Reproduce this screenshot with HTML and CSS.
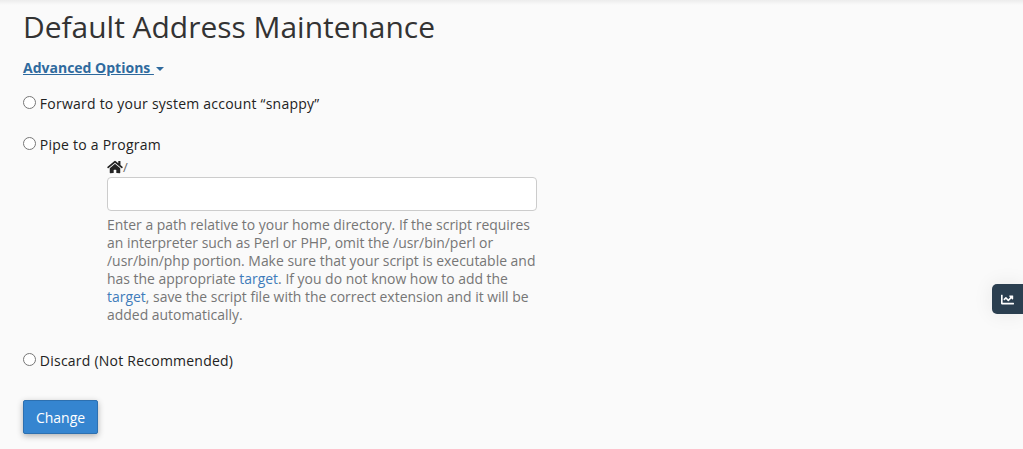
FILE: index.html
```html
<!DOCTYPE html>
<html lang="en">
<head>
<meta charset="utf-8">
<title>Default Address Maintenance</title>
<link rel="stylesheet" href="styles.css">
</head>
<body>
<div class="top-shadow"></div>
<main class="content">
  <h1 class="title">Default Address Maintenance</h1>
  <p class="advanced"><a href="#" class="advanced-link">Advanced Options <span class="caret"></span></a></p>
  <div class="option option-forward">
    <label class="radio-label"><input type="radio" name="d"> Forward to your system account “snappy”</label>
  </div>
  <div class="option option-pipe">
    <label class="radio-label"><input type="radio" name="d"> Pipe to a Program</label>
  </div>
  <div class="pipe-detail">
    <div class="home-row"><svg class="home" viewBox="0 0 576 512" width="16" height="14"><path fill="#222" d="M280.4 148.3 96 300.1V464a16 16 0 0 0 16 16l112-.3a16 16 0 0 0 15.9-16V368a16 16 0 0 1 16-16h64a16 16 0 0 1 16 16v95.6a16 16 0 0 0 16 16.1l112 .3a16 16 0 0 0 16-16V300L295.7 148.3a12.2 12.2 0 0 0-15.3 0zM571.6 251.5 488 182.6V44a12 12 0 0 0-12-12h-56a12 12 0 0 0-12 12v72.6L318.5 43a48 48 0 0 0-61 0L4.3 251.5a12 12 0 0 0-1.6 16.9l25.5 31A12 12 0 0 0 45.2 301l235.2-193.7a12.2 12.2 0 0 1 15.3 0L530.900 301a12 12 0 0 0 16.9-1.6l25.5-31a12 12 0 0 0-1.7-16.9z"/></svg><span class="slash">/</span></div>
    <input class="path-input" type="text">
    <p class="help">Enter a path relative to your home directory. If the script requires an interpreter such as Perl or PHP, omit the /usr/bin/perl or /usr/bin/php portion. Make sure that your script is executable and has the appropriate <a href="#">target</a>. If you do not know how to add the <a href="#">target</a>, save the script file with the correct extension and it will be added automatically.</p>
  </div>
  <div class="option option-discard">
    <label class="radio-label"><input type="radio" name="d"> Discard (Not Recommended)</label>
  </div>
  <button class="btn" type="button">Change</button>
</main>
<div class="side-tab"><svg viewBox="0 0 512 512" width="13" height="13"><path fill="#fff" d="M496 384H64V80a16 16 0 0 0-16-16H16A16 16 0 0 0 0 80v336a32 32 0 0 0 32 32h464a16 16 0 0 0 16-16v-32a16 16 0 0 0-16-16zM464 96H346a24 24 0 0 0-17 41l32.400 32.400L288 242.700l-73.400-73.400a32 32 0 0 0-45.200 0l-68.700 68.700a16 16 0 0 0 0 22.600l22.600 22.600a16 16 0 0 0 22.600 0L192 237.300l73.400 73.400a32 32 0 0 0 45.200 0l96-96 32.400 32.400a24 24 0 0 0 41-17V112a16 16 0 0 0-16-16z"/></svg></div>
</body>
</html>
```
FILE: styles.css
```css
html, body { margin: 0; padding: 0; }
body {
  height: 449px;
  overflow: hidden;
  background: #fafafa;
  color: #293a4a;
  font-family: "Open Sans", sans-serif;
  font-size: 14px;
  line-height: 20px;
  position: relative;
}
.top-shadow {
  position: absolute;
  top: 0; left: 0; right: 0;
  height: 5px;
  background: linear-gradient(#ececec, #fafafa);
}
.content { padding: 0 23px; }
.title {
  margin: 0;
  padding-top: 8px;
  font-size: 29.95px;
  line-height: 38px;
  font-weight: 400;
  color: #333;
}
.advanced { margin: 12px 0 0; font-weight: 700; }
.advanced-link { color: #2f6a9e; text-decoration: underline; }
.caret {
  display: inline-block;
  width: 0; height: 0;
  margin-left: 2px;
  vertical-align: middle;
  border-top: 4px solid #2f6a9e;
  border-left: 4px solid transparent;
  border-right: 4px solid transparent;
}
.option { font-weight: 500; letter-spacing: .23px; }
.option-forward { margin-top: 16px; }
.option-pipe { margin-top: 21px; }
.option-discard { margin-top: 27px; }
.radio-label { color: #222; }
.radio-label input { margin: 0; width: 13px; height: 13px; vertical-align: 0; }
.pipe-detail { margin-left: 84px; width: 430px; }
.home-row { height: 22px; line-height: 22px; display: flex; align-items: center; padding-top: 1px; box-sizing: border-box; }
.slash { color: #666; font-size: 13px; }
.path-input {
  display: block;
  box-sizing: border-box;
  width: 430px;
  height: 34px;
  background: #fff;
  border: 1px solid #ccc;
  border-radius: 4px;
}
.help { margin: 5px 0 0; color: #767676; font-size: 13.95px; line-height: 18px; }
.help a { color: #3f7cba; text-decoration: none; }
.btn {
  display: block;
  margin-top: 29px;
  width: 75px;
  height: 34px;
  padding: 0;
  background: #3585d0;
  color: #fff;
  border: 1px solid #2d70b0;
  border-radius: 2px;
  font-family: "Open Sans", sans-serif;
  font-size: 14px;
  box-shadow: 0 2px 6px rgba(0,0,0,.3);
}
.side-tab {
  position: absolute;
  right: 0;
  top: 284px;
  width: 31px;
  height: 30px;
  background: #2b3f50;
  border-radius: 5px 0 0 5px;
  display: flex;
  align-items: center;
  justify-content: center;
  box-shadow: 0 0 20px rgba(0,0,0,.08);
}
```
